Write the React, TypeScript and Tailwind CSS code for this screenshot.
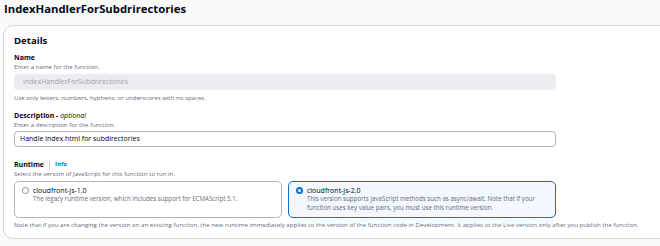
const runtimes = [
  {
    id: "1.0",
    title: "cloudfront-js-1.0",
    desc: ["The legacy runtime version, which includes support for ECMAScript 5.1."],
    checked: false,
  },
  {
    id: "2.0",
    title: "cloudfront-js-2.0",
    desc: [
      "This version supports JavaScript methods such as async/await. Note that if your",
      "function uses key value pairs, you must use this runtime version.",
    ],
    checked: true,
  },
]

function Radio({ checked }: { checked: boolean }) {
  return checked ? (
    <span className="mt-[1px] h-[7px] w-[7px] flex-shrink-0 rounded-full border-[2px] border-[#0972d3] bg-white" />
  ) : (
    <span className="mt-[1px] h-[7px] w-[7px] flex-shrink-0 rounded-full border border-[#8c8c94] bg-white" />
  )
}

export default function App() {
  return (
    <div className="h-[246px] w-[660px] overflow-hidden bg-[#fafafa] font-['Open_Sans',sans-serif] text-[#000716]">
      <h1 className="pl-[4px] pt-[2px] text-[11.3px] font-bold leading-[14px]">IndexHandlerForSubdrirectories</h1>

      <div className="ml-[3px] mt-[9px] h-[214px] w-[700px] rounded-[10px] border border-[#d5d5da] bg-white px-[10px] pt-[9px]">
        <h2 className="text-[9.6px] font-bold leading-[12px]">Details</h2>

        {/* Name */}
        <div className="mt-[6px] text-[7px] font-bold leading-[9px]">Name</div>
        <div className="mt-[1px] text-[6.1px] leading-[8px] text-[#5f6b7a]">Enter a name for the function.</div>
        <div className="mt-[3px] flex h-[16px] w-[542px] items-center rounded-[4px] bg-[#ebebf0] pl-[9px] text-[7px] text-[#a3a3ab]">
          IndexHandlerForSubdrirectories
        </div>
        <div className="mt-[4px] text-[6.1px] leading-[8px] text-[#5f6b7a]">
          Use only letters, numbers, hyphens, or underscores with no spaces.
        </div>

        {/* Description */}
        <div className="mt-[9px] text-[7px] font-bold leading-[9px]">
          Description - <span className="font-normal italic">optional</span>
        </div>
        <div className="mt-[1px] text-[6.1px] leading-[8px] text-[#5f6b7a]">Enter a description for the function.</div>
        <div className="mt-[2px] flex h-[16px] w-[542px] items-center rounded-[4px] border border-[#b4b4bb] bg-white pl-[5px] text-[7px]">
          Handle index.html for subdirectories
        </div>

        {/* Runtime */}
        <div className="mt-[13px] flex items-center text-[7px] font-bold leading-[9px]">
          Runtime
          <span className="mx-[5px] h-[8px] w-px bg-[#d5d5da]" />
          <span className="text-[6px] text-[#0972d3]">Info</span>
        </div>
        <div className="mt-[1px] text-[6.1px] leading-[8px] text-[#5f6b7a]">
          Select the version of JavaScript for this function to run in.
        </div>
        <div className="mt-[3px] grid w-[542px] grid-cols-2 gap-[6px]">
          {runtimes.map((r) => (
            <div
              key={r.id}
              className={
                r.checked
                  ? "flex h-[37px] gap-[4px] rounded-[5px] border border-[#0972d3] bg-[#f2f8fd] px-[7px] pt-[4px]"
                  : "flex h-[37px] gap-[4px] rounded-[5px] border border-[#b4b4bb] bg-white px-[7px] pt-[4px]"
              }
            >
              <Radio checked={r.checked} />
              <div>
                <div className="text-[7px] leading-[9px]">{r.title}</div>
                {r.desc.map((d) => (
                  <div key={d} className="whitespace-nowrap text-[6.2px] leading-[8.5px] text-[#5f6b7a]">{d}</div>
                ))}
              </div>
            </div>
          ))}
        </div>
        <div className="mt-[3px] whitespace-nowrap text-[6.15px] leading-[8px] text-[#5f6b7a]">
          Note that if you are changing the version on an existing function, the new runtime immediately applies to the version of the function code in Development. It applies to the Live version only after you publish the function.
        </div>
      </div>
    </div>
  )
}
